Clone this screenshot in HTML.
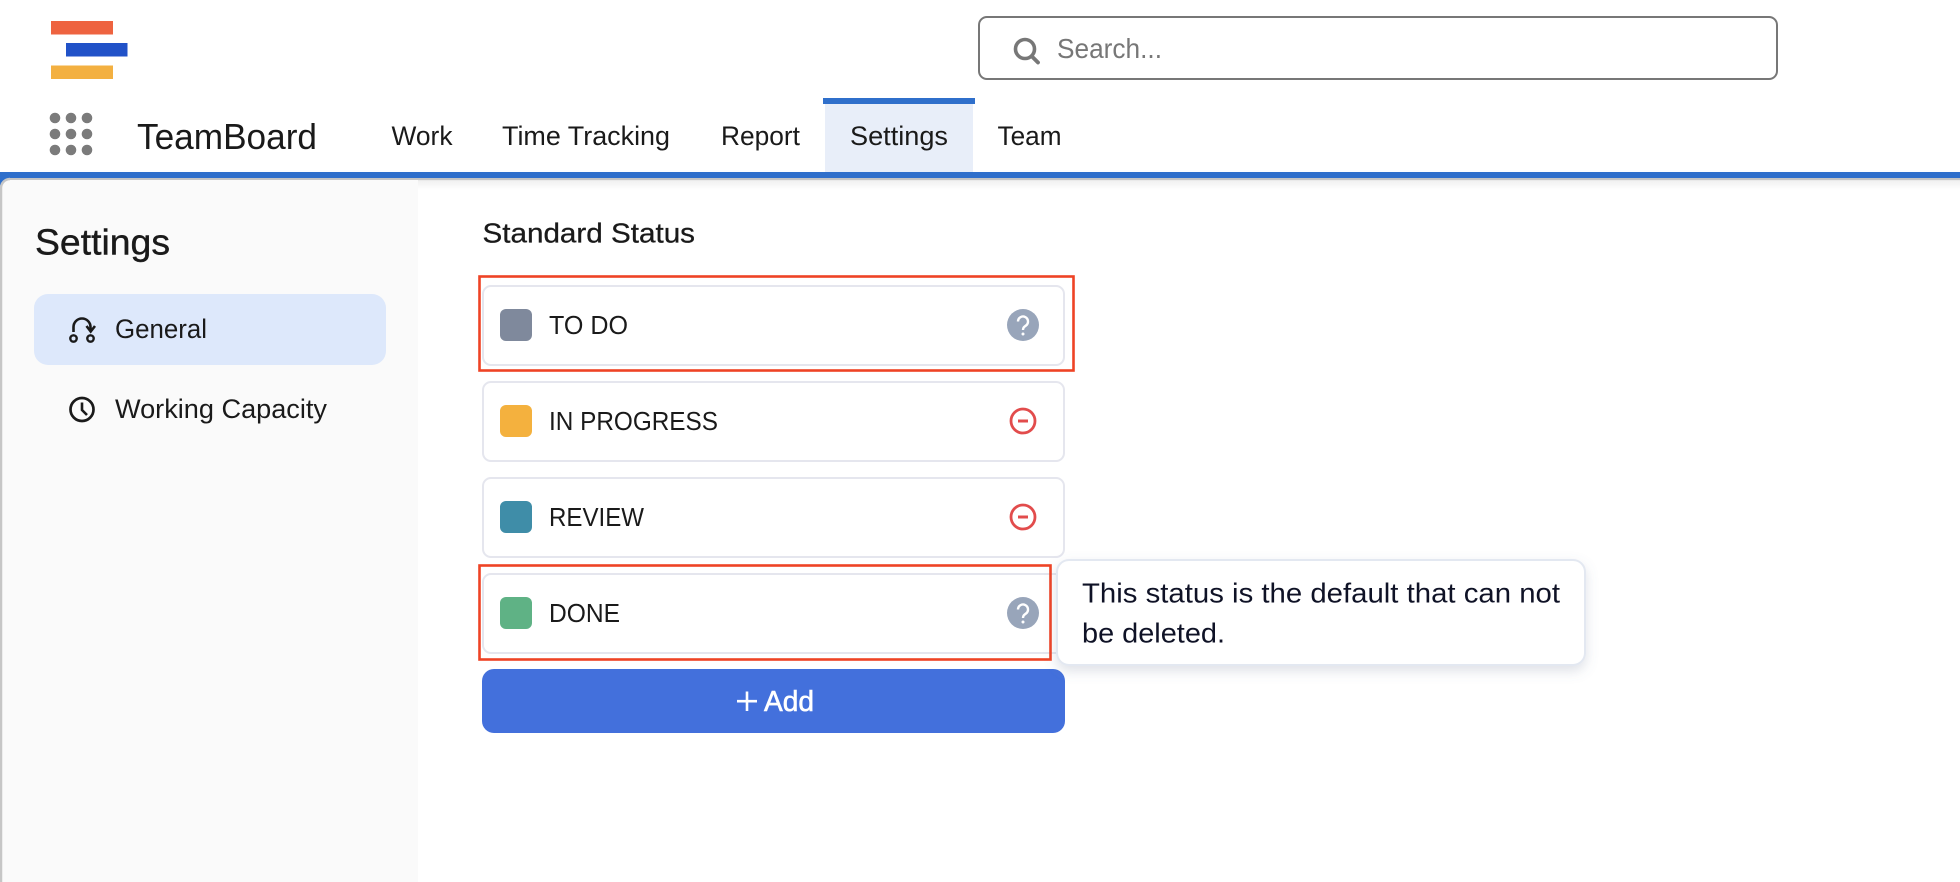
<!DOCTYPE html>
<html lang="en">
<head>
<meta charset="utf-8">
<title>TeamBoard Settings</title>
<style>
html,body{margin:0;padding:0;background:#fff;width:1960px;height:882px;overflow:hidden}
svg{display:block}
text{font-family:"Liberation Sans",sans-serif;fill:#1a1a1a}
</style>
</head>
<body>
<svg width="1960" height="882" viewBox="0 0 1960 882" xmlns="http://www.w3.org/2000/svg">
<defs>
<linearGradient id="sh" x1="0" y1="0" x2="0" y2="1">
<stop offset="0" stop-color="#c2c2c2"/>
<stop offset="0.16" stop-color="#c6c6c6"/>
<stop offset="0.2" stop-color="#f0f0f0"/>
<stop offset="1" stop-color="#ffffff"/>
</linearGradient>
<filter id="ds" x="-10%" y="-20%" width="120%" height="150%">
<feDropShadow dx="0" dy="5" stdDeviation="6" flood-color="#6b7690" flood-opacity="0.22"/>
</filter>
</defs>
<rect width="1960" height="882" fill="#fff"/>

<!-- logo -->
<rect x="51" y="21" width="62" height="13.5" fill="#ee6340"/>
<rect x="66" y="43" width="61.5" height="13.5" fill="#2152c8"/>
<rect x="51" y="65.500" width="62" height="13.500" fill="#f3b041"/>

<!-- search -->
<rect x="979" y="17" width="798" height="62" rx="8" fill="#fff" stroke="#777" stroke-width="2"/>
<circle cx="1025" cy="49" r="9.500" fill="none" stroke="#777" stroke-width="3.600"/>
<path d="M1032 56.500L1038 62.500" fill="none" stroke="#777" stroke-width="3.800" stroke-linecap="round"/>
<text x="1057" y="58" font-size="27.500" textLength="105" lengthAdjust="spacingAndGlyphs" style="fill:#777">Search...</text>

<!-- grid -->
<g fill="#7b7b7b">
<circle cx="55" cy="118" r="5.300"/><circle cx="71" cy="118" r="5.300"/><circle cx="87" cy="118" r="5.300"/>
<circle cx="55" cy="134" r="5.300"/><circle cx="71" cy="134" r="5.300"/><circle cx="87" cy="134" r="5.300"/>
<circle cx="55" cy="150" r="5.300"/><circle cx="71" cy="150" r="5.300"/><circle cx="87" cy="150" r="5.300"/>
</g>
<text x="137" y="149" font-size="36.500" textLength="180" lengthAdjust="spacingAndGlyphs">TeamBoard</text>

<!-- nav -->
<rect x="825" y="104" width="148" height="68" fill="#e8eef9"/>
<rect x="823" y="98" width="152" height="6" fill="#2f6fcb"/>
<text x="391.500" y="145" font-size="26.500" textLength="61" lengthAdjust="spacingAndGlyphs">Work</text>
<text x="502" y="145" font-size="26.500" textLength="168" lengthAdjust="spacingAndGlyphs">Time Tracking</text>
<text x="721" y="145" font-size="26.500" textLength="79" lengthAdjust="spacingAndGlyphs">Report</text>
<text x="850" y="145" font-size="26.500" textLength="98" lengthAdjust="spacingAndGlyphs">Settings</text>
<text x="997.500" y="145" font-size="26.500" textLength="64" lengthAdjust="spacingAndGlyphs">Team</text>

<!-- header line + shadow -->
<rect x="0" y="178" width="1960" height="12" fill="url(#sh)"/>
<rect x="0" y="172" width="1960" height="6" fill="#2f6fcb"/>

<!-- sidebar -->
<path d="M0 178H10A10 10 0 0 0 0 188Z" fill="#2f6fcb"/>
<path d="M2 882V188A8 8 0 0 1 10 180H418V882Z" fill="#fafafa"/>
<path d="M1 882V188A9 9 0 0 1 10 179" fill="none" stroke="#c6c6c6" stroke-width="2.500"/>
<text x="35" y="254.500" font-size="36" textLength="135" lengthAdjust="spacingAndGlyphs" stroke="#1a1a1a" stroke-width="0.400">Settings</text>
<rect x="34" y="294" width="352" height="71" rx="14" fill="#dde8fb"/>
<circle cx="73.500" cy="338.500" r="3.200" fill="none" stroke="#1a1a1a" stroke-width="2.400"/>
<circle cx="90.500" cy="338.500" r="3.200" fill="none" stroke="#1a1a1a" stroke-width="2.400"/>
<path d="M73.500 332V327A8.500 8.500 0 0 1 90.500 327V331" fill="none" stroke="#1a1a1a" stroke-width="2.600"/>
<path d="M86.500 326L90.700 331.500L95 326" fill="none" stroke="#1a1a1a" stroke-width="2.600"/>
<text x="115" y="338" font-size="26.500" textLength="92" lengthAdjust="spacingAndGlyphs">General</text>
<circle cx="82" cy="409.500" r="11.500" fill="none" stroke="#1a1a1a" stroke-width="2.700"/>
<path d="M82 402.500V410L87 415" fill="none" stroke="#1a1a1a" stroke-width="2.600"/>
<text x="115" y="418" font-size="26.500" textLength="212" lengthAdjust="spacingAndGlyphs">Working Capacity</text>

<!-- main -->
<text x="482.500" y="242.500" font-size="27.500" textLength="212.500" lengthAdjust="spacingAndGlyphs" stroke="#1a1a1a" stroke-width="0.300">Standard Status</text>

<g fill="#fff" stroke="#e5e6ee" stroke-width="2">
<rect x="483" y="286" width="581" height="79" rx="8"/>
<rect x="483" y="382" width="581" height="79" rx="8"/>
<rect x="483" y="478" width="581" height="79" rx="8"/>
<rect x="483" y="574" width="581" height="79" rx="8"/>
</g>

<rect x="500" y="309" width="32" height="32" rx="6" fill="#7f899c"/>
<rect x="500" y="405" width="32" height="32" rx="6" fill="#f4b13e"/>
<rect x="500" y="501" width="32" height="32" rx="6" fill="#3f8da8"/>
<rect x="500" y="597" width="32" height="32" rx="6" fill="#5fb285"/>

<text x="549" y="334" font-size="26" textLength="79" lengthAdjust="spacingAndGlyphs">TO DO</text>
<text x="549" y="430" font-size="26" textLength="169" lengthAdjust="spacingAndGlyphs">IN PROGRESS</text>
<text x="549" y="526" font-size="26" textLength="95" lengthAdjust="spacingAndGlyphs">REVIEW</text>
<text x="549" y="622" font-size="26" textLength="71" lengthAdjust="spacingAndGlyphs">DONE</text>

<!-- help icons -->
<circle cx="1023" cy="325" r="16" fill="#98a5ba"/>
<path d="M1018 321.500A5 5 0 1 1 1026 325.500C1024.300 326.800 1023 327.500 1023 330" fill="none" stroke="#fff" stroke-width="2.400"/>
<circle cx="1023" cy="334" r="1.500" fill="#fff"/>
<circle cx="1023" cy="613" r="16" fill="#98a5ba"/>
<path d="M1018 609.500A5 5 0 1 1 1026 613.500C1024.300 614.800 1023 615.500 1023 618" fill="none" stroke="#fff" stroke-width="2.400"/>
<circle cx="1023" cy="622" r="1.500" fill="#fff"/>

<!-- minus icons -->
<circle cx="1023" cy="421" r="12" fill="none" stroke="#e24c4c" stroke-width="2.800"/>
<rect x="1018" y="419.500" width="10" height="3" fill="#e24c4c"/>
<circle cx="1023" cy="517" r="12" fill="none" stroke="#e24c4c" stroke-width="2.800"/>
<rect x="1018" y="515.500" width="10" height="3" fill="#e24c4c"/>

<!-- red boxes -->
<rect x="479.500" y="276.500" width="594" height="94" fill="none" stroke="#ee4325" stroke-width="2.600"/>
<rect x="479.500" y="565.500" width="571" height="94" fill="none" stroke="#ee4325" stroke-width="2.600"/>

<!-- add button -->
<rect x="482" y="669" width="583" height="64" rx="12" fill="#4370dc"/>
<path d="M747 691.500V711M737 701.200H757" stroke="#fff" stroke-width="2.600" fill="none"/>
<text x="764" y="711" font-size="29" textLength="50" lengthAdjust="spacingAndGlyphs" style="fill:#fff" stroke="#fff" stroke-width="0.600">Add</text>

<!-- tooltip -->
<rect x="1057" y="560" width="528" height="105" rx="12" fill="#fff" stroke="#e3e8f1" stroke-width="2" filter="url(#ds)"/>
<text x="1082" y="602.500" font-size="27.500" textLength="478" lengthAdjust="spacingAndGlyphs" style="fill:#0f1226">This status is the default that can not</text>
<text x="1082" y="642.500" font-size="27.500" textLength="143" lengthAdjust="spacingAndGlyphs" style="fill:#0f1226">be deleted.</text>
</svg>
</body>
</html>
